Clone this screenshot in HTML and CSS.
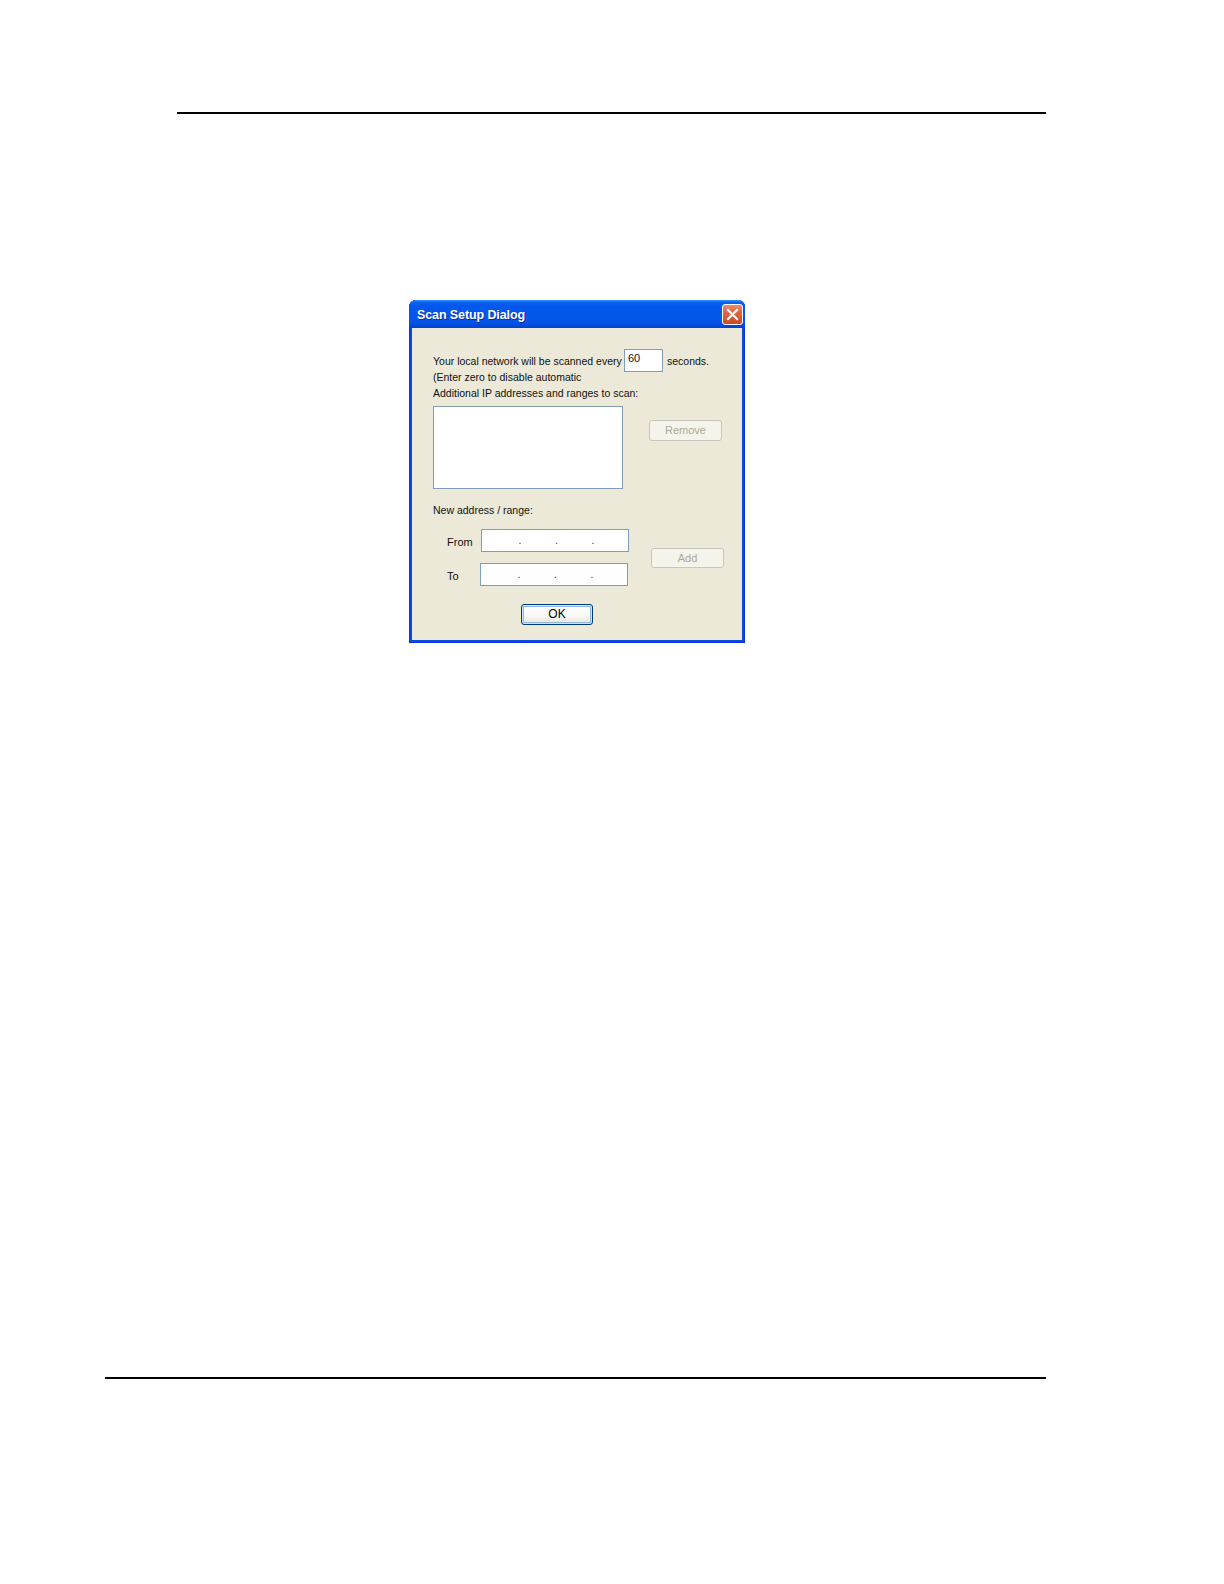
FILE: index.html
```html
<!DOCTYPE html>
<html>
<head>
<meta charset="utf-8">
<title>Scan Setup Dialog</title>
<link rel="stylesheet" href="styles.css">
</head>
<body>
<div class="page">
  <div class="rule rule-top"></div>
  <div class="figure">
    <div class="dialog">
      <div class="titlebar">
        <span class="title">Scan Setup Dialog</span>
        <span class="close">
          <svg width="13" height="13" viewBox="0 0 13 13"><path d="M2 2 L11 11 M11 2 L2 11" stroke="#fff" stroke-width="2.2" stroke-linecap="square" fill="none"/></svg>
        </span>
      </div>
      <div class="dlg-body">
        <div class="row-interval">
          <span class="lbl-interval">Your local network will be scanned every</span>
          <span class="edit edit-num">60</span>
          <span class="lbl-seconds">seconds.</span>
        </div>
        <div class="line">(Enter zero to disable automatic</div>
        <div class="line">Additional IP addresses and ranges to scan:</div>
        <div class="row-list">
          <div class="edit listbox"></div>
          <button class="btn btn-disabled btn-remove" disabled>Remove</button>
        </div>
        <div class="line line-new">New address / range:</div>
        <div class="row-range">
          <div class="range-fields">
            <div class="range-row">
              <span class="range-lbl">From</span>
              <div class="edit ipbox"><span class="oct"></span><span class="dot">.</span><span class="oct"></span><span class="dot">.</span><span class="oct"></span><span class="dot">.</span><span class="oct"></span></div>
            </div>
            <div class="range-row">
              <span class="range-lbl range-lbl-to">To</span>
              <div class="edit ipbox"><span class="oct"></span><span class="dot">.</span><span class="oct"></span><span class="dot">.</span><span class="oct"></span><span class="dot">.</span><span class="oct"></span></div>
            </div>
          </div>
          <button class="btn btn-disabled btn-add" disabled>Add</button>
        </div>
        <div class="row-ok">
          <button class="btn btn-ok">OK</button>
        </div>
      </div>
    </div>
  </div>
  <div class="rule rule-bottom"></div>
</div>
</body>
</html>
```

FILE: styles.css
```css
html, body {
  margin: 0;
  padding: 0;
  background: #ffffff;
}

.page {
  padding-top: 112px;
  padding-bottom: 100px;
  font-family: "Liberation Sans", Arial, sans-serif;
}

.rule {
  height: 2px;
  background: #000000;
}

.rule-top {
  margin-left: 177px;
  width: 869px;
}

.rule-bottom {
  margin-top: 734px;
  margin-left: 105px;
  width: 941px;
}

.figure {
  margin: 186px 0 0 409px;
  width: 336px;
}

.dialog {
  width: 336px;
  background: #0a4bdc;
  border-radius: 7px 7px 0 0;
  overflow: hidden;
  box-shadow: inset 1px 0 0 #0831d9, inset -1px 0 0 #0831d9, inset 0 -1px 0 #0831d9;
}

.titlebar {
  height: 28px;
  box-sizing: border-box;
  display: flex;
  align-items: center;
  justify-content: space-between;
  padding: 1px 2px 0 8px;
  background: linear-gradient(to bottom,
    #3d95ff 0%,
    #0a64f0 8%,
    #0058ee 20%,
    #0556ea 55%,
    #0454e6 80%,
    #0349d6 92%,
    #0242c9 100%);
}

.title {
  color: #ffffff;
  font-weight: bold;
  font-size: 12.5px;
  letter-spacing: -0.1px;
  text-shadow: 1px 1px 0 #0a2fa0;
}

.close {
  width: 21px;
  height: 21px;
  box-sizing: border-box;
  border: 1px solid #ffffff;
  border-radius: 3px;
  background: linear-gradient(to bottom, #eb8c6c 0%, #e0653f 40%, #cc4a24 100%);
  display: flex;
  align-items: center;
  justify-content: center;
}

.close svg {
  display: block;
}

.dlg-body {
  margin: 0 3px 3px 3px;
  background: #ece9d8;
  padding: 21px 0 15px 21px;
  font-size: 10.5px;
  line-height: 16px;
  color: #111111;
}

.row-interval {
  display: flex;
  align-items: flex-start;
}

.lbl-interval {
  width: 191px;
  padding-top: 4px;
  white-space: nowrap;
}

.edit {
  box-sizing: border-box;
  background: #ffffff;
  border: 1px solid #7f9db9;
}

.edit-num {
  width: 39px;
  height: 23px;
  margin-bottom: -3px;
  padding: 0 0 0 3px;
  line-height: 16px;
  font-size: 11px;
}

.lbl-seconds {
  margin-left: 4px;
  padding-top: 4px;
}

.line {
  white-space: nowrap;
}

.row-list {
  display: flex;
  align-items: flex-start;
  margin-top: 5px;
}

.listbox {
  width: 190px;
  height: 83px;
}

.btn {
  box-sizing: border-box;
  width: 73px;
  height: 21px;
  padding: 0;
  margin: 0;
  border-radius: 3px;
  font-family: "Liberation Sans", Arial, sans-serif;
  font-size: 11px;
  line-height: 19px;
  text-align: center;
}

.btn-disabled {
  border: 1px solid #c9c7ba;
  background: #f5f4ea;
  color: #aca899;
}

.btn-remove {
  margin-left: 26px;
  margin-top: 14px;
}

.line-new {
  margin-top: 13px;
}

.row-range {
  display: flex;
  align-items: center;
  margin-top: 11px;
}

.range-fields {
  display: flex;
  flex-direction: column;
  gap: 11px;
  padding-left: 14px;
}

.range-row {
  display: flex;
  align-items: center;
}

.range-lbl {
  width: 34px;
  padding-top: 2px;
  font-size: 11px;
}

.range-lbl-to {
  width: 33px;
}

.ipbox {
  width: 148px;
  height: 23px;
  display: flex;
  padding-left: 3px;
  line-height: 21px;
  color: #333333;
}

.oct {
  flex: 1;
}

.dot {
  width: 3px;
  text-align: center;
}

.btn-add {
  margin-left: 22px;
  height: 20px;
  line-height: 18px;
}

.row-ok {
  margin-top: 18px;
  padding-left: 88px;
  display: flex;
}

.btn-ok {
  width: 72px;
  border: 1px solid #003c74;
  color: #000000;
  font-size: 12px;
  background: linear-gradient(to bottom, #ffffff 0%, #f7f7f3 60%, #ebe8dd 90%, #d6d0c5 100%);
  box-shadow: inset 0 0 0 1px #cee7ff, inset 0 0 0 2px #90b4ee;
}
```
